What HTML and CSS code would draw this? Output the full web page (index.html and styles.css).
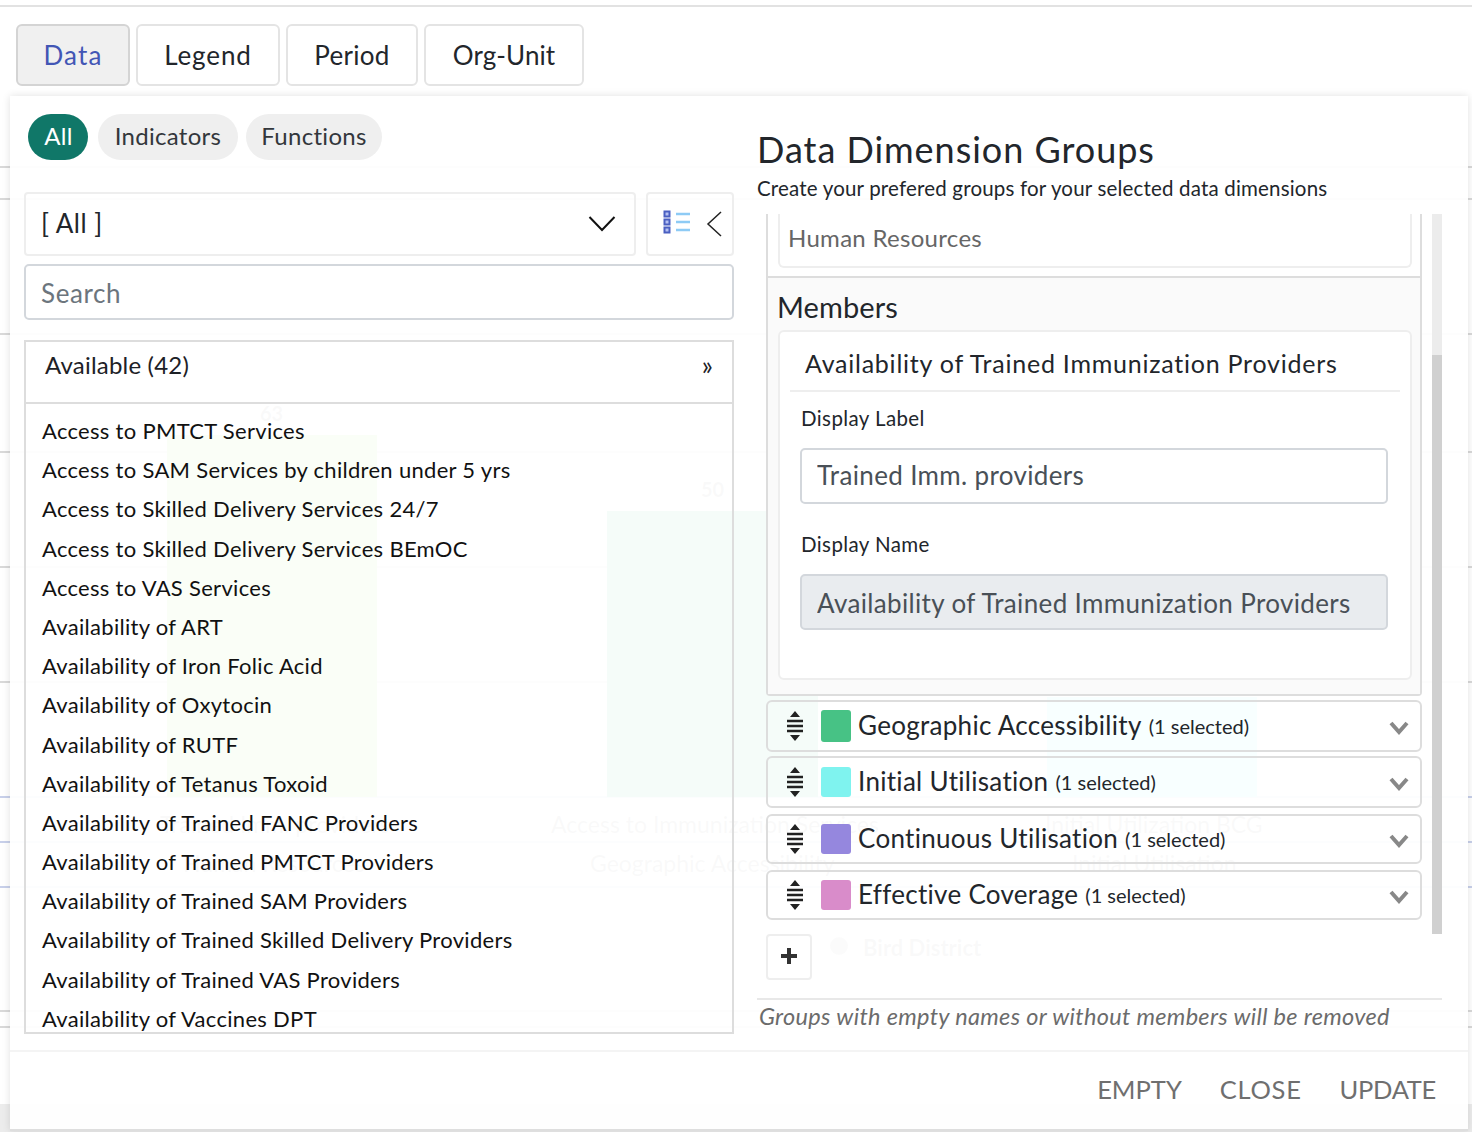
FILE: index.html
```html
<!DOCTYPE html>
<html lang="en">
<head>
    <meta charset="UTF-8">
    <meta name="viewport" content="width=device-width, initial-scale=1.0">
    <title>Data Dimension Groups</title>
    <link rel="stylesheet" href="styles.css">
</head>
<body>
    <!-- dashboard chart showing through behind the dialog -->
    <div class="backdrop">
        <div class="grid-line line-a"></div>
        <div class="grid-line line-b"></div>
        <div class="grid-line line-c"></div>
        <div class="grid-line line-d"></div>
        <div class="grid-line line-j"></div>
        <div class="grid-line line-k"></div>
        <div class="grid-line grid-line-blue line-e"></div>
        <div class="grid-line grid-line-blue line-f"></div>
        <div class="grid-line grid-line-blue line-g"></div>
        <div class="grid-line line-h"></div>
        <div class="grid-line line-i"></div>
        <div class="table-foot"></div>
        <div class="bar bar-green"></div>
        <div class="bar bar-teal"></div>
        <div class="bar bar-cyan"></div>
        <div class="ghost ghost-63">63</div>
        <div class="ghost ghost-50">50</div>
        <div class="ghost ghost-various">Trained Imm. providers</div>
        <div class="ghost ghost-hr">Human Resources</div>
        <div class="ghost ghost-access">Access to Immunization Services</div>
        <div class="ghost ghost-geo">Geographic Accessibility</div>
        <div class="ghost ghost-bcg">Initial Utilization BCG</div>
        <div class="ghost ghost-initial">Initial Utilisation</div>
        <div class="ghost-dot"></div>
        <div class="ghost ghost-bird">Bird District</div>
    </div>

    <div class="page">
        <div class="top-line"></div>

        <div class="tabs">
            <button class="tab tab-data active">Data</button>
            <button class="tab tab-legend">Legend</button>
            <button class="tab tab-period">Period</button>
            <button class="tab tab-org">Org-Unit</button>
        </div>

        <div class="modal">
            <div class="modal-body">
                <div class="left-col">
                    <div class="pills">
                        <span class="pill pill-all active">All</span>
                        <span class="pill pill-ind">Indicators</span>
                        <span class="pill pill-fn">Functions</span>
                    </div>

                    <div class="select-row">
                        <div class="select-box">
                            <span class="select-value">[ All ]</span>
                            <svg class="select-chevron" width="28" height="18" viewBox="0 0 28 18"><path d="M1.5 2 L14 15 L26.5 2" fill="none" stroke="#111" stroke-width="2"/></svg>
                        </div>
                        <div class="view-toggle">
                            <svg class="list-icon" width="28" height="24" viewBox="0 0 28 24">
                                <rect x="1.5" y="1.5" width="5" height="5" fill="#b4c0f2" stroke="#4a5fc1" stroke-width="2"/>
                                <rect x="1.5" y="9.5" width="5" height="5" fill="#b4c0f2" stroke="#4a5fc1" stroke-width="2"/>
                                <rect x="1.5" y="17.5" width="5" height="5" fill="#b4c0f2" stroke="#4a5fc1" stroke-width="2"/>
                                <path d="M13 4 H27 M13 12 H27 M13 20 H27" stroke="#8ecbf5" stroke-width="2.5"/>
                            </svg>
                            <svg width="16" height="26" viewBox="0 0 16 26"><path d="M15 1 L2 13 L15 25" fill="none" stroke="#222" stroke-width="1.5"/></svg>
                        </div>
                    </div>

                    <input class="search" type="text" placeholder="Search">

                    <div class="transfer">
                        <div class="transfer-head">
                            <span>Available (42)</span>
                            <span class="move-all">»</span>
                        </div>
                        <ul class="transfer-list">
                            <li>Access to PMTCT Services</li>
                            <li>Access to SAM Services by children under 5 yrs</li>
                            <li>Access to Skilled Delivery Services 24/7</li>
                            <li>Access to Skilled Delivery Services BEmOC</li>
                            <li>Access to VAS Services</li>
                            <li>Availability of ART</li>
                            <li>Availability of Iron Folic Acid</li>
                            <li>Availability of Oxytocin</li>
                            <li>Availability of RUTF</li>
                            <li>Availability of Tetanus Toxoid</li>
                            <li>Availability of Trained FANC Providers</li>
                            <li>Availability of Trained PMTCT Providers</li>
                            <li>Availability of Trained SAM Providers</li>
                            <li>Availability of Trained Skilled Delivery Providers</li>
                            <li>Availability of Trained VAS Providers</li>
                            <li>Availability of Vaccines DPT</li>
                        </ul>
                    </div>
                </div>

                <div class="right-col">
                    <h2>Data Dimension Groups</h2>
                    <p class="subtitle">Create your prefered groups for your selected data dimensions</p>

                    <div class="scroll-area">
                        <div class="scroll-content">
                            <div class="group-open">
                                <div class="group-name-wrap">
                                    <div class="group-name">Human Resources</div>
                                </div>
                                <div class="members">
                                    <h3>Members</h3>
                                    <div class="member-card">
                                        <div class="member-title">Availability of Trained Immunization Providers</div>
                                        <div class="member-fields">
                                            <label for="displayLabel">Display Label</label>
                                            <input id="displayLabel" class="field" type="text" value="Trained Imm. providers">
                                            <label class="label-second" for="displayName">Display Name</label>
                                            <input id="displayName" class="field field-disabled" type="text" value="Availability of Trained Immunization Providers" disabled>
                                        </div>
                                    </div>
                                </div>
                            </div>

                            <div class="group-row group-row-tall">
                                <svg class="sort-icon" width="18" height="30" viewBox="0 0 18 30"><path d="M9 0 L14 6 H4 Z M9 30 L4 24 H14 Z" fill="#222"/><path d="M1 10 H17 M1 15 H17 M1 20 H17" stroke="#222" stroke-width="2.4"/></svg>
                                <span class="swatch swatch-green"></span>
                                <span class="group-title">Geographic Accessibility</span>
                                <span class="group-count">(1 selected)</span>
                                <svg class="row-chevron" width="20" height="14" viewBox="0 0 20 14"><path d="M2 2 L10 11 L18 2" fill="none" stroke="#888" stroke-width="4"/></svg>
                            </div>
                            <div class="group-row group-row-tall">
                                <svg class="sort-icon" width="18" height="30" viewBox="0 0 18 30"><path d="M9 0 L14 6 H4 Z M9 30 L4 24 H14 Z" fill="#222"/><path d="M1 10 H17 M1 15 H17 M1 20 H17" stroke="#222" stroke-width="2.4"/></svg>
                                <span class="swatch swatch-cyan"></span>
                                <span class="group-title">Initial Utilisation</span>
                                <span class="group-count">(1 selected)</span>
                                <svg class="row-chevron" width="20" height="14" viewBox="0 0 20 14"><path d="M2 2 L10 11 L18 2" fill="none" stroke="#888" stroke-width="4"/></svg>
                            </div>
                            <div class="group-row">
                                <svg class="sort-icon" width="18" height="30" viewBox="0 0 18 30"><path d="M9 0 L14 6 H4 Z M9 30 L4 24 H14 Z" fill="#222"/><path d="M1 10 H17 M1 15 H17 M1 20 H17" stroke="#222" stroke-width="2.4"/></svg>
                                <span class="swatch swatch-purple"></span>
                                <span class="group-title">Continuous Utilisation</span>
                                <span class="group-count">(1 selected)</span>
                                <svg class="row-chevron" width="20" height="14" viewBox="0 0 20 14"><path d="M2 2 L10 11 L18 2" fill="none" stroke="#888" stroke-width="4"/></svg>
                            </div>
                            <div class="group-row">
                                <svg class="sort-icon" width="18" height="30" viewBox="0 0 18 30"><path d="M9 0 L14 6 H4 Z M9 30 L4 24 H14 Z" fill="#222"/><path d="M1 10 H17 M1 15 H17 M1 20 H17" stroke="#222" stroke-width="2.4"/></svg>
                                <span class="swatch swatch-pink"></span>
                                <span class="group-title">Effective Coverage</span>
                                <span class="group-count">(1 selected)</span>
                                <svg class="row-chevron" width="20" height="14" viewBox="0 0 20 14"><path d="M2 2 L10 11 L18 2" fill="none" stroke="#888" stroke-width="4"/></svg>
                            </div>
                        </div>
                        <div class="scrollbar"><div class="scrollbar-thumb"></div></div>
                    </div>

                    <button class="add-group">
                        <svg width="18" height="18" viewBox="0 0 18 18"><path d="M9 1 V17 M1 9 H17" stroke="#333" stroke-width="4"/></svg>
                    </button>

                    <p class="note">Groups with empty names or without members will be removed</p>
                </div>
            </div>

            <div class="modal-footer">
                <button class="footer-btn">EMPTY</button>
                <button class="footer-btn footer-close">CLOSE</button>
                <button class="footer-btn footer-update">UPDATE</button>
            </div>
        </div>
    </div>
</body>
</html>
```

FILE: styles.css
```css
* {
    box-sizing: border-box;
}

html, body {
    height: 100%;
}

body {
    margin: 0;
    font-family: "Lato", "Noto Sans", sans-serif;
    color: #1d2126;
    background: #fff;
    overflow: hidden;
    position: relative;
}

/* chart behind the dialog */
.backdrop {
    position: absolute;
    inset: 0;
}

.grid-line {
    position: absolute;
    left: 0;
    right: 0;
    height: 2px;
    background: #d9d9d9;
}

.grid-line-blue {
    background: #c8d0ea;
}

.line-a { top: 166px; }
.line-b { top: 198px; }
.line-c { top: 333px; }
.line-d { top: 451px; }
.line-j { top: 566px; }
.line-k { top: 681px; }
.line-e { top: 796px; }
.line-f { top: 841px; }
.line-g { top: 886px; }
.line-h { top: 1010px; }
.line-i { top: 1026px; }

.table-foot {
    position: absolute;
    left: 0;
    right: 0;
    top: 1104px;
    bottom: 0;
    background: #ececec;
}

.bar {
    position: absolute;
    bottom: 335px;
}

.bar-green {
    left: 167px;
    width: 210px;
    top: 435px;
    background: #9be86a;
}

.bar-teal {
    left: 607px;
    width: 211px;
    top: 511px;
    background: #47c285;
}

.bar-cyan {
    left: 1047px;
    width: 210px;
    top: 697px;
    background: #7ff3ef;
}

.ghost {
    position: absolute;
    font-size: 23px;
    line-height: 28px;
    color: #8f8f8f;
    white-space: nowrap;
}

.ghost-63 { left: 260px; top: 399px; font-size: 20px; font-weight: 700; }
.ghost-50 { left: 701px; top: 475px; font-size: 20px; font-weight: 700; }
.ghost-various { left: 160px; top: 810px; }
.ghost-hr { left: 183px; top: 849px; }
.ghost-access { left: 551px; top: 810px; }
.ghost-geo { left: 590px; top: 849px; }
.ghost-bcg { left: 1045px; top: 810px; }
.ghost-initial { left: 1072px; top: 849px; }
.ghost-bird { left: 863px; top: 934px; font-weight: 700; font-size: 22px; }

.ghost-dot {
    position: absolute;
    left: 830px;
    top: 937px;
    width: 18px;
    height: 18px;
    border-radius: 50%;
    background: #8f8f8f;
    opacity: 0.7;
}

.page {
    position: relative;
    height: 100%;
}

.page::before {
    content: "";
    display: table;
}

.top-line {
    height: 2px;
    margin-top: 5px;
    background: #e2e2e2;
}

/* tabs */
.tabs {
    display: flex;
    gap: 6px;
    margin: 17px 0 0 16px;
}

.tab {
    height: 62px;
    background: #fff;
    border: 2px solid #e4e4e4;
    border-radius: 6px;
    font-family: inherit;
    font-size: 26px;
    color: #22262b;
    letter-spacing: 0.3px;
    padding: 0 0 1px;
}

.tab-data { width: 114px; letter-spacing: 1.1px; }
.tab-legend { width: 144px; letter-spacing: 0.9px; }
.tab-period { width: 132px; }
.tab-org { width: 160px; letter-spacing: 0.1px; }

.tab.active {
    background: #f0f0f0;
    border-color: #d4d4d4;
    color: #4256b5;
}

/* dialog */
.modal {
    display: flex;
    flex-direction: column;
    width: 1458px;
    height: 1035px;
    margin: 10px 0 0 10px;
    background: rgba(255, 255, 255, 0.95);
    border-bottom: 2px solid #dedede;
    box-shadow: 0 0 8px rgba(0, 0, 0, 0.12);
}

.modal-body {
    display: grid;
    grid-template-columns: 710px 685px;
    column-gap: 23px;
    padding-left: 14px;
    height: 954px;
}

.left-col {
    padding-top: 18px;
}

.pills {
    display: flex;
    gap: 8px;
    padding-left: 4px;
}

.pill {
    display: flex;
    align-items: center;
    justify-content: center;
    height: 46px;
    padding-bottom: 4px;
    border-radius: 23px;
    background: #efefef;
    font-size: 24px;
    color: #33373c;
    letter-spacing: 0.3px;
}

.pill-all { width: 60px; margin-right: 2px; padding-left: 1px; }
.pill-ind { width: 140px; }
.pill-fn { width: 136px; }

.pill.active {
    background: #107768;
    color: #fff;
}

.select-row {
    display: flex;
    gap: 10px;
    margin-top: 32px;
}

.select-box {
    display: flex;
    align-items: center;
    justify-content: space-between;
    width: 612px;
    height: 64px;
    padding: 0 18px 0 15px;
    border: 2px solid #eeeeee;
    border-radius: 4px;
    font-size: 26px;
    color: #22262b;
}

.select-value {
    margin-bottom: 2px;
    letter-spacing: 0.5px;
}

.view-toggle {
    display: flex;
    align-items: center;
    gap: 15px;
    width: 88px;
    height: 64px;
    padding-left: 15px;
    border: 2px solid #eeeeee;
    border-radius: 4px;
}

.list-icon {
    margin-bottom: 4px;
}

.search {
    display: block;
    width: 100%;
    height: 56px;
    margin-top: 8px;
    padding: 2px 15px 0;
    border: 2px solid #d3d7dc;
    border-radius: 5px;
    background: #fff;
    font-family: inherit;
    font-size: 26px;
    letter-spacing: 0.6px;
}

.search::placeholder {
    color: #6c757d;
    opacity: 1;
}

.transfer {
    height: 694px;
    margin-top: 20px;
    border: 2px solid #dddddd;
    overflow: hidden;
}

.transfer-head {
    display: flex;
    justify-content: space-between;
    height: 62px;
    padding: 8px 19px 0 19px;
    border-bottom: 2px solid #dddddd;
    font-size: 24px;
    line-height: 30px;
    letter-spacing: 0.2px;
}

.move-all {
    font-size: 26px;
}

.transfer-list {
    list-style: none;
    margin: 0;
    padding: 7px 0 0 16px;
}

.transfer-list li {
    height: 39.2px;
    line-height: 39.2px;
    font-size: 22px;
    letter-spacing: 0.3px;
    color: #111;
    white-space: nowrap;
}

/* groups panel */
.right-col h2 {
    margin: 31px 0 0;
    font-size: 36px;
    line-height: 44px;
    font-weight: 400;
    letter-spacing: 0.97px;
    color: #22262b;
}

.subtitle {
    margin: 3px 0 0;
    font-size: 20.5px;
    line-height: 28px;
    letter-spacing: 0.18px;
    color: #22262b;
}

.scroll-area {
    display: flex;
    height: 720px;
    margin-top: 12px;
    padding-left: 9px;
}

.scroll-content {
    width: 656px;
}

.scrollbar {
    display: flex;
    flex-direction: column;
    justify-content: flex-end;
    width: 10px;
    margin-left: 10px;
    background: #ececec;
}

.scrollbar-thumb {
    height: 579px;
    background: #d0d0d0;
}

.group-open {
    height: 482px;
    border: 2px solid #dddddd;
    border-top: none;
    border-radius: 0 0 4px 4px;
}

.group-name-wrap {
    height: 64px;
    padding: 0 8px 8px 10px;
    border-bottom: 2px solid #dddddd;
}

.group-name {
    height: 54px;
    padding: 8px 8px 0;
    border: 2px solid #eeeeee;
    border-top: none;
    border-radius: 0 0 6px 6px;
    background: #fff;
    font-size: 24px;
    line-height: 32px;
    letter-spacing: 0.3px;
    color: #666;
}

.members {
    height: 416px;
    padding: 0 8px 0 10px;
    background: #fafafa;
}

.members h3 {
    margin: 0 0 0 -1px;
    padding-top: 13px;
    font-size: 29px;
    line-height: 32px;
    font-weight: 400;
    letter-spacing: 0.1px;
    color: #22262b;
}

.member-card {
    height: 350px;
    margin-top: 7px;
    border: 2px solid #eeeeee;
    border-radius: 6px;
    background: #fff;
}

.member-title {
    height: 60px;
    margin: 0 10px;
    padding: 15px 0 0 15px;
    border-bottom: 2px solid #eeeeee;
    font-size: 25px;
    line-height: 32px;
    letter-spacing: 0.76px;
    color: #22262b;
}

.member-fields {
    padding: 13px 22px 0 20px;
}

.member-fields label {
    display: block;
    padding-left: 1px;
    font-size: 20.5px;
    line-height: 26px;
    letter-spacing: 0.4px;
    color: #22262b;
}

.member-fields .label-second {
    margin-top: 27px;
}

.field {
    display: block;
    width: 100%;
    height: 56px;
    margin-top: 17px;
    padding: 0 15px 2px;
    border: 2px solid #d3d7dc;
    border-radius: 5px;
    background: #fff;
    font-family: inherit;
    font-size: 26px;
    letter-spacing: 0.35px;
    color: #495057;
}

.field-disabled {
    padding: 2px 15px 0;
    background: #e9ecef;
}

.group-row {
    display: flex;
    align-items: center;
    height: 50px;
    margin-top: 6px;
    padding: 0 11px 0 18px;
    border: 2px solid #dddddd;
    border-radius: 6px;
}

.group-row-tall {
    height: 52px;
    margin-top: 4px;
}

.swatch {
    flex: none;
    width: 30px;
    height: 30px;
    margin-left: 17px;
    border-radius: 3px;
}

.swatch-green { background: #47c285; height: 32px; }
.swatch-cyan { background: #7ff3ef; }
.swatch-purple { background: #9587de; }
.swatch-pink { background: #d98cca; }

.group-title {
    margin: 0 0 3px 7px;
    font-size: 26px;
    letter-spacing: 0.3px;
    color: #22262b;
}

.group-count {
    margin-left: 7px;
    font-size: 20px;
    color: #22262b;
}

.row-chevron {
    margin-left: auto;
    margin-top: 4px;
}

.add-group {
    display: flex;
    align-items: center;
    justify-content: center;
    width: 46px;
    height: 46px;
    margin-left: 9px;
    padding: 0 0 2px;
    border: 2px solid #eeeeee;
    border-radius: 4px;
    background: #fff;
}

.note {
    margin: 18px 0 0;
    padding: 2px 0 0 2px;
    border-top: 2px solid #e8e8e8;
    font-size: 23.5px;
    line-height: 28px;
    letter-spacing: 0.32px;
    font-style: italic;
    color: #6b6b6b;
}

.modal-footer {
    display: flex;
    justify-content: flex-end;
    align-items: center;
    gap: 38px;
    height: 79px;
    padding: 0 32px 4px 0;
    border-top: 2px solid #f4f4f4;
}

.footer-btn {
    padding: 0;
    border: none;
    background: none;
    font-family: inherit;
    font-size: 25.5px;
    color: #6f6f6f;
}

.footer-close {
    letter-spacing: 0.7px;
}

.footer-update {
    letter-spacing: -0.3px;
}
```
